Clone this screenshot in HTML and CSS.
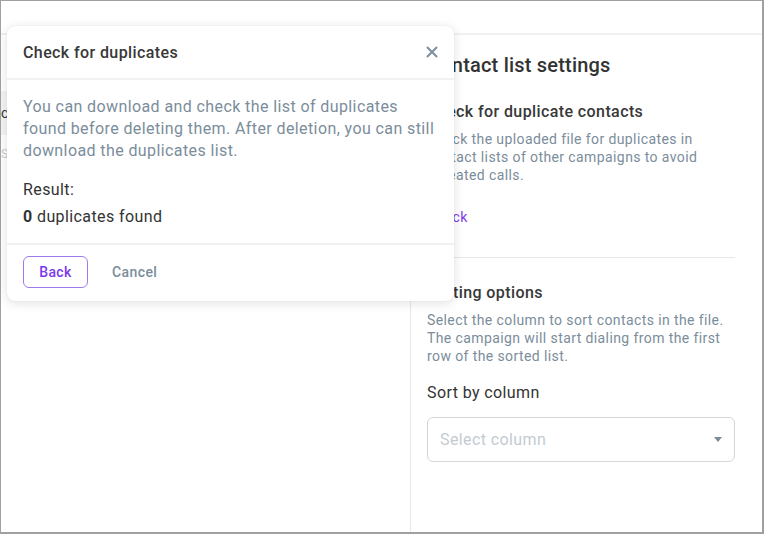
FILE: index.html
```html
<!DOCTYPE html>
<html lang="en">
<head>
  <meta charset="UTF-8">
  <title>Contact list settings</title>
  <link rel="stylesheet" href="styles.css">
</head>
<body>
  <div class="frame">
    <div class="topbar"></div>

    <div class="main">
      <div class="left-col">
        <div class="ghost-field">c</div>
        <div class="ghost-hint">S</div>
      </div>

      <div class="settings">
        <h1>Contact list settings</h1>

        <h3>Check for duplicate contacts</h3>
        <p class="hint">Check the uploaded file for duplicates in contact lists of other campaigns to avoid repeated calls.</p>
        <a class="link" href="#">Check</a>

        <hr class="divider">

        <h3>Sorting options</h3>
        <p class="hint">Select the column to sort contacts in the file. The campaign will start dialing from the first row of the sorted list.</p>

        <label class="field-label">Sort by column</label>
        <div class="select">
          <span class="placeholder">Select column</span>
          <span class="caret"></span>
        </div>
      </div>
    </div>

    <div class="modal">
      <div class="modal-header">
        <h2>Check for duplicates</h2>
        <span class="close">
          <svg width="12" height="12" viewBox="0 0 12 12"><path d="M1.5 1.5 L10.5 10.5 M10.5 1.5 L1.5 10.5" stroke="#7d8e9b" stroke-width="2" stroke-linecap="round"/></svg>
        </span>
      </div>
      <div class="modal-body">
        <p class="modal-text">You can download and check the list of duplicates found before deleting them. After deletion, you can still download the duplicates list.</p>
        <p class="result">Result:</p>
        <p class="result"><b>0</b> duplicates found</p>
      </div>
      <div class="modal-footer">
        <button class="btn-outline">Back</button>
        <button class="btn-text">Cancel</button>
      </div>
    </div>
  </div>
</body>
</html>
```

FILE: styles.css
```css
body {
  margin: 0;
  font-family: Roboto, "Liberation Sans", Arial, sans-serif;
  letter-spacing: 0.4px;
  background: #fff;
}

.frame {
  position: relative;
  width: 764px;
  height: 534px;
  box-sizing: border-box;
  border: 1px solid #a0a0a0;
  border-right-width: 2px;
  border-bottom-width: 2px;
  display: flex;
  flex-direction: column;
  overflow: hidden;
}

.topbar {
  height: 32px;
  border-bottom: 2px solid #f0f1f2;
  flex-shrink: 0;
}

.main {
  flex: 1;
  display: flex;
}

.left-col {
  width: 409px;
  flex-shrink: 0;
  padding-top: 56px;
}

.ghost-field {
  height: 44px;
  background: #f3f4f5;
  font-size: 14px;
  line-height: 44px;
  color: #333;
}

.ghost-hint {
  margin-top: 12px;
  font-size: 12px;
  color: #ccc;
}

.settings {
  flex: 1;
  border-left: 1px solid #e6e8ea;
  padding: 18px 27px 0 16px;
}

.settings h1 {
  margin: 0;
  font-size: 20px;
  line-height: 24px;
  font-weight: 500;
  letter-spacing: 0.2px;
  color: #333;
}

.settings h3 {
  margin: 25px 0 0;
  font-size: 16px;
  line-height: 20px;
  font-weight: 500;
  color: #383838;
}

.hint {
  max-width: 300px;
  margin: 8px 0 0;
  font-size: 14px;
  line-height: 18px;
  color: #7b8d9b;
}

.link {
  display: block;
  margin-top: 24px;
  font-size: 14px;
  line-height: 18px;
  color: #7c3aed;
  text-decoration: none;
}

.divider {
  margin: 31px 0 0;
  border: none;
  border-top: 1px solid #e6e8ea;
}

.divider + h3 {
  margin-top: 25px;
}

.field-label {
  display: block;
  margin-top: 18px;
  font-size: 16px;
  line-height: 20px;
  color: #333;
}

.select {
  margin-top: 14px;
  height: 45px;
  box-sizing: border-box;
  border: 1px solid #d3d7db;
  border-radius: 6px;
  display: flex;
  align-items: center;
  justify-content: space-between;
  padding: 0 12px 0 12px;
}

.placeholder {
  font-size: 16px;
  color: #c3cbd2;
}

.caret {
  width: 0;
  height: 0;
  border-left: 4px solid transparent;
  border-right: 4px solid transparent;
  border-top: 5px solid #7b8d9b;
}

/* modal over the page */
.modal {
  position: absolute;
  left: 6px;
  top: 25px;
  width: 447px;
  background: #fff;
  border-radius: 8px;
  box-shadow: 0 2px 12px rgba(0, 0, 0, 0.12), 0 0 1px rgba(0, 0, 0, 0.15);
}

.modal-header {
  height: 52px;
  display: flex;
  align-items: center;
  justify-content: space-between;
  padding: 0 16px;
  border-bottom: 2px solid #f0f1f2;
}

.modal-header h2 {
  margin: 0;
  font-size: 16px;
  font-weight: 500;
  color: #383838;
}

.close {
  display: flex;
}

.modal-body {
  padding: 16px 16px 13px;
  border-bottom: 2px solid #f0f1f2;
}

.modal-text {
  margin: 0 0 14px;
  font-size: 16px;
  line-height: 22px;
  color: #7b8d9b;
}

.result {
  margin: 0;
  font-size: 16px;
  line-height: 27px;
  color: #333;
}

.result b {
  font-weight: 700;
}

.modal-footer {
  display: flex;
  align-items: center;
  gap: 8px;
  padding: 11px 16px 13px;
}

.btn-outline {
  font-family: inherit;
  letter-spacing: inherit;
  width: 65px;
  height: 32px;
  border: 1px solid #9f7aea;
  border-radius: 6px;
  background: #fff;
  color: #7c3aed;
  font-size: 14px;
  font-weight: 500;
}

.btn-text {
  font-family: inherit;
  letter-spacing: inherit;
  height: 32px;
  padding: 0 16px;
  border: none;
  background: none;
  color: #7b8d9b;
  font-size: 14px;
  font-weight: 500;
}
```
